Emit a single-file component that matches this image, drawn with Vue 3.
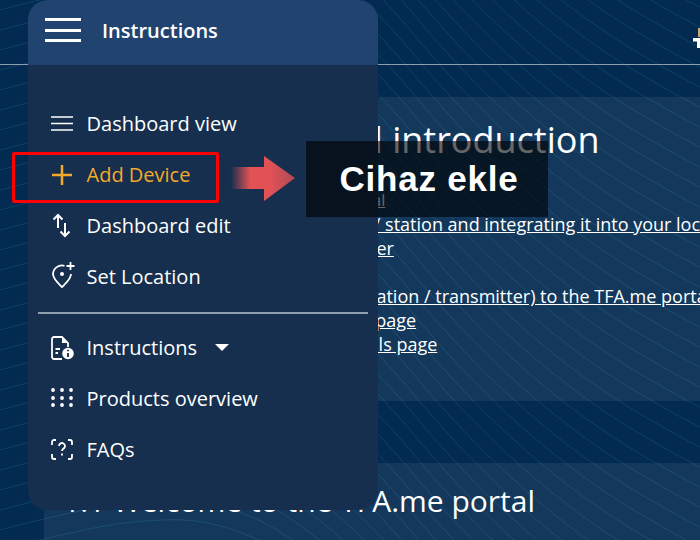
<template>
  <div class="page">
    <svg class="waves" width="700" height="540" viewBox="0 0 700 540">
      <path v-for="y in offsets" :key="y" :d="wave" :transform="`translate(0 ${y})`" />
    </svg>

    <header class="top">
      <svg class="logo" width="7" height="20" viewBox="0 0 7 20">
        <path d="M5 0h2v9H5z" fill="#c9a86a" />
        <path d="M0 10h7v10H4v-6.500H0z" fill="#fff" />
      </svg>
    </header>

    <section class="card first">
      <h1>2. TFA.me general introduction</h1>
      <a class="l-a">Download the detailed TFA.me PDF manual</a>
      <a class="l-b">Setting up your first TFA.me gateway / station and integrating it into your local network</a>
      <a class="l-c">Connecting the weather station to a server</a>
      <a class="l-d">Adding the TFA.me weather device (station / transmitter) to the TFA.me portal</a>
      <a class="l-e">Description of the whole dashboard page</a>
      <a class="l-f">Description of the radio station details page</a>
    </section>

    <section class="card second">
      <h2>1.1 Welcome to the TFA.me portal</h2>
    </section>

    <aside class="menu">
      <div class="menu-head">
        <span class="burger"><i></i><i></i><i></i></span>
        <span class="menu-title">Instructions</span>
      </div>
      <nav class="menu-body">
        <a class="item">
          <svg viewBox="0 0 24 24" width="24" height="24"><path d="M1 5h22M1 11.500h22M1 18h22" /></svg>
          Dashboard view
        </a>
        <a class="item active">
          <svg viewBox="0 0 24 24" width="24" height="24"><path d="M12 2v20M2 12h20" stroke-width="2.500" /></svg>
          Add Device
        </a>
        <a class="item">
          <svg viewBox="0 0 24 24" width="24" height="24"><path d="M8 14V1M3.500 5.500 8 1l4.500 4.500M15 9v13M10.500 17.500 15 22l4.500-4.500" stroke-width="2" /></svg>
          Dashboard edit
        </a>
        <a class="item">
          <svg viewBox="0 0 24 24" width="24" height="24">
            <path d="M14.500 .8A9 9 0 0 0 3 9c0 5 5 9 9 13 4-4 9-8 9-13" stroke-width="1.800" />
            <circle cx="12" cy="9" r="2" fill="#fff" stroke="none" />
            <path d="M20.500-3V5M16.500 1h8" stroke-width="1.800" />
          </svg>
          Set Location
        </a>
        <hr />
        <a class="item">
          <svg viewBox="0 0 24 24" width="24" height="24">
            <path d="M12 23H4a2 2 0 0 1-2-2V3a2 2 0 0 1 2-2h8l6 6v4" stroke-width="1.800" />
            <path d="M12 1l6 6h-6z" fill="#fff" stroke="none" />
            <path d="M5.500 13H10M5.500 17H8" stroke-width="1.800" />
            <circle cx="18" cy="17.500" r="5.800" fill="#fff" stroke="none" />
            <path d="M18 17v4M18 13.800v1.500" stroke="#162f4e" stroke-width="1.800" />
          </svg>
          Instructions
          <span class="caret"></span>
        </a>
        <a class="item">
          <svg viewBox="0 0 24 24" width="24" height="24">
            <g fill="#fff" stroke="none">
              <template v-for="y in [3, 11, 18]" :key="y">
                <circle v-for="x in [3, 12, 21]" :key="x" :cx="x" :cy="y" r="1.900" />
              </template>
            </g>
          </svg>
          Products overview
        </a>
        <a class="item">
          <svg viewBox="0 0 24 24" width="24" height="24">
            <path d="M6 2H4a2 2 0 0 0-2 2v3M18 2h2a2 2 0 0 1 2 2v3M2 16v3a2 2 0 0 0 2 2h2M22 16v3a2 2 0 0 1-2 2h-2" stroke-width="1.800" />
            <path d="M9 8a3 3 0 1 1 4.500 2.600c-1 .6-1.500 1.200-1.500 2.400M12 15.500v2" stroke-width="1.800" />
          </svg>
          FAQs
        </a>
      </nav>
    </aside>

    <div class="highlight"></div>
    <div class="arrow"></div>
    <div class="label">Cihaz ekle</div>
  </div>
</template>

<script setup>
// slope of the background wave per x, read off the reference
const slopes = [
  [0, -0.27],
  [100, -0.2],
  [180, 0],
  [300, 0.7],
  [420, 1.2],
  [520, 0.9],
  [640, 0.6],
  [720, 0.5],
];

const slopeAt = (x) => {
  let i = 0;
  while (i < slopes.length - 2 && x > slopes[i + 1][0]) i++;
  const [x0, s0] = slopes[i];
  const [x1, s1] = slopes[i + 1];
  return s0 + ((s1 - s0) * (x - x0)) / (x1 - x0);
};

let y = 0;
let wave = "M0 0";
for (let x = 10; x <= 710; x += 10) {
  y += slopeAt(x) * 10;
  wave += ` L${x} ${y.toFixed(1)}`;
}

const offsets = Array.from({ length: 70 }, (_, i) => -830 + i * 20);
</script>

<style>
html,
body {
  margin: 0;
  background: #032a50;
}
</style>

<style scoped>
.page {
  position: relative;
  width: 700px;
  height: 540px;
  overflow: hidden;
  background: #032a50;
  font-family: "Open Sans", sans-serif;
  color: #fff;
}
.waves {
  position: absolute;
  left: 0;
  top: 0;
  pointer-events: none;
}
.waves path {
  fill: none;
  stroke: #0e4669;
  stroke-width: 1;
  opacity: 0.85;
}
.top {
  position: relative;
  height: 64px;
  border-bottom: 1px solid #8d9fae;
  display: flex;
  justify-content: flex-end;
  align-items: center;
  margin-bottom: 32px;
}
.logo {
  margin-top: 12px;
}
.card {
  position: relative;
  margin-left: 44px;
  background: rgba(255, 255, 255, 0.065);
  box-sizing: border-box;
  padding-left: 24px;
}
.card a {
  display: block;
  font-size: 18px;
  line-height: 24px;
  text-decoration: underline;
  white-space: nowrap;
}
.first {
  height: 304px;
  padding-top: 20px;
}
.first h1 {
  margin: 0 0 25px 16px;
  font-size: 36px;
  line-height: 46px;
  font-weight: 400;
  white-space: nowrap;
}
.card .l-a {
  margin-left: -5px;
  font-size: 16px;
}
.card .l-b {
  margin-left: -5px;
}
.card .l-c {
  margin-left: -31px;
}
.card .l-d {
  margin: 24px 0 0 -6px;
}
.card .l-e {
  margin-left: 2px;
}
.card .l-f {
  margin-left: 3px;
}
.second {
  margin-top: 62px;
  height: 100px;
  padding-top: 18px;
}
.second h2 {
  margin: 0 0 0 -5px;
  font-size: 30px;
  line-height: 40px;
  font-weight: 400;
  white-space: nowrap;
}
.menu {
  position: absolute;
  left: 28px;
  top: 0;
  width: 350px;
  height: 510px;
  z-index: 3;
  background: #162f4e;
  border-radius: 20px;
  overflow: hidden;
}
.menu-head {
  height: 65px;
  background: #20446f;
  display: flex;
  align-items: center;
  padding: 0 0 5px 17px;
  box-sizing: border-box;
}
.burger {
  width: 36px;
  display: flex;
  flex-direction: column;
  gap: 7.500px;
  margin-right: 21px;
}
.burger i {
  display: block;
  height: 3px;
  background: #fff;
}
.menu-title {
  font-size: 20px;
  font-weight: 600;
}
.menu-body {
  padding-top: 33px;
}
.item {
  display: flex;
  align-items: center;
  height: 51px;
  padding-left: 22px;
  font-size: 20px;
  white-space: nowrap;
}
.item svg {
  flex: none;
  margin-right: 12.500px;
  overflow: visible;
  fill: none;
  stroke: #fff;
  stroke-width: 1.5;
}
.active {
  color: #f5a928;
}
.active svg {
  stroke: #f5a928;
}
.menu hr {
  margin: 10px 10px 8px;
  border: 0;
  height: 2px;
  background: #8d9fae;
}
.caret {
  margin-left: 18px;
  border-left: 7px solid transparent;
  border-right: 7px solid transparent;
  border-top: 7px solid #fff;
}
.highlight {
  position: absolute;
  left: 12px;
  top: 152px;
  width: 207px;
  height: 51px;
  box-sizing: border-box;
  border: 3px solid #ff0000;
  border-radius: 2px;
  z-index: 4;
}
.arrow {
  position: absolute;
  left: 231px;
  top: 156px;
  width: 64px;
  height: 45px;
  z-index: 4;
  background: linear-gradient(90deg, rgba(226, 82, 85, 0) 0%, #e25255 30%, #e25255 60%, #b04a55 100%);
  clip-path: polygon(0 11px, 33px 11px, 33px 0, 64px 22px, 33px 45px, 33px 33px, 0 33px);
}
.label {
  position: absolute;
  left: 306px;
  top: 141px;
  width: 242px;
  height: 76px;
  z-index: 4;
  box-sizing: border-box;
  padding-left: 4px;
  background: rgba(0, 0, 0, 0.6);
  display: flex;
  align-items: center;
  justify-content: center;
  font-family: "Liberation Sans", sans-serif;
  font-weight: 700;
  font-size: 35px;
  letter-spacing: 0.800px;
}
</style>
